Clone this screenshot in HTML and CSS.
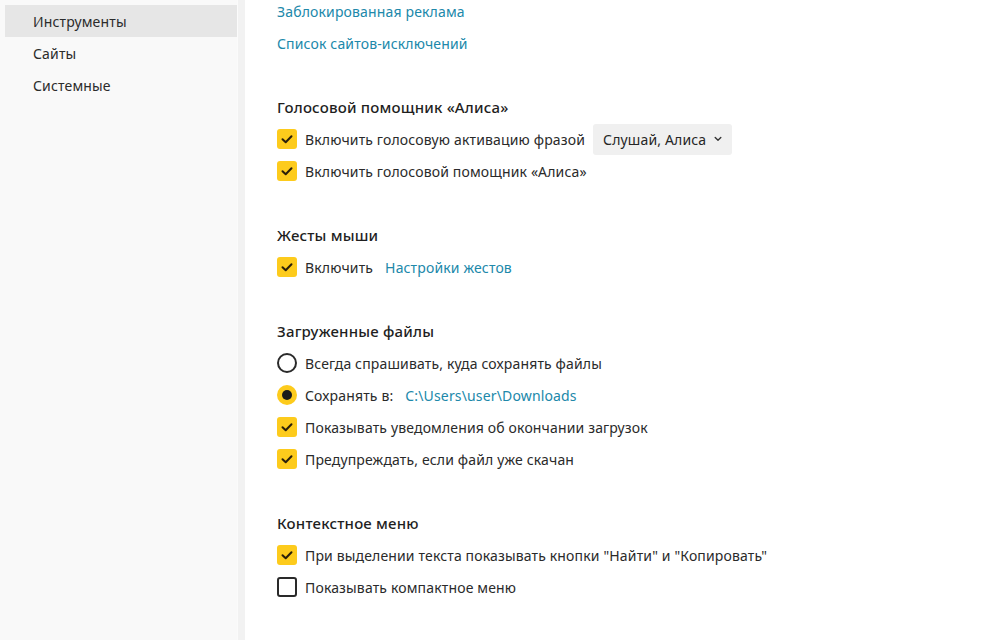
FILE: index.html
```html
<!DOCTYPE html>
<html lang="ru">
<head>
<meta charset="utf-8">
<link rel="stylesheet" href="styles.css">
</head>
<body>
<div class="page">
  <nav class="sidebar">
    <div class="nav-item active">Инструменты</div>
    <div class="nav-item">Сайты</div>
    <div class="nav-item">Системные</div>
  </nav>
  <div class="divider"></div>
  <main class="main">
    <section class="section first">
      <div class="row"><a class="link">Заблокированная реклама</a></div>
      <div class="row"><a class="link">Список сайтов-исключений</a></div>
    </section>

    <section class="section">
      <h2 class="heading">Голосовой помощник «Алиса»</h2>
      <div class="row">
        <span class="cb on"><svg viewBox="0 0 20 20"><path d="M5.5 10.2l3.2 3.1 5.8-6"/></svg></span>
        <span class="label">Включить голосовую активацию фразой</span>
        <span class="select">Слушай, Алиса <svg class="chev" viewBox="0 0 8 6"><path d="M1.2 1.6l2.8 2.6 2.8-2.6"/></svg></span>
      </div>
      <div class="row">
        <span class="cb on"><svg viewBox="0 0 20 20"><path d="M5.5 10.2l3.2 3.1 5.8-6"/></svg></span>
        <span class="label">Включить голосовой помощник «Алиса»</span>
      </div>
    </section>

    <section class="section">
      <h2 class="heading">Жесты мыши</h2>
      <div class="row">
        <span class="cb on"><svg viewBox="0 0 20 20"><path d="M5.5 10.2l3.2 3.1 5.8-6"/></svg></span>
        <span class="label">Включить</span>
        <a class="link inline">Настройки жестов</a>
      </div>
    </section>

    <section class="section">
      <h2 class="heading">Загруженные файлы</h2>
      <div class="row">
        <span class="radio"></span>
        <span class="label">Всегда спрашивать, куда сохранять файлы</span>
      </div>
      <div class="row">
        <span class="radio on"></span>
        <span class="label">Сохранять в:</span>
        <a class="link inline">C:\Users\user\Downloads</a>
      </div>
      <div class="row">
        <span class="cb on"><svg viewBox="0 0 20 20"><path d="M5.5 10.2l3.2 3.1 5.8-6"/></svg></span>
        <span class="label">Показывать уведомления об окончании загрузок</span>
      </div>
      <div class="row">
        <span class="cb on"><svg viewBox="0 0 20 20"><path d="M5.5 10.2l3.2 3.1 5.8-6"/></svg></span>
        <span class="label">Предупреждать, если файл уже скачан</span>
      </div>
    </section>

    <section class="section">
      <h2 class="heading">Контекстное меню</h2>
      <div class="row">
        <span class="cb on"><svg viewBox="0 0 20 20"><path d="M5.5 10.2l3.2 3.1 5.8-6"/></svg></span>
        <span class="label">При выделении текста показывать кнопки "Найти" и "Копировать"</span>
      </div>
      <div class="row">
        <span class="cb"></span>
        <span class="label">Показывать компактное меню</span>
      </div>
    </section>
  </main>
</div>
</body>
</html>
```

FILE: styles.css
```css
* { box-sizing: border-box; }
html, body {
  margin: 0;
  height: 100%;
  background: #ffffff;
  overflow: hidden;
}
body {
  font-family: "Noto Sans", "Open Sans", sans-serif;
  font-size: 14px;
  letter-spacing: 0.15px;
  color: #2a2a2a;
}
.page {
  display: flex;
  height: 640px;
}
.sidebar {
  width: 237px;
  flex: none;
  background: #f9f9f9;
  padding: 5px 0 0 5px;
}
.nav-item {
  height: 32px;
  line-height: 33px;
  padding-left: 28px;
  color: #2b2b2b;
}
.nav-item.active {
  background: #e6e6e6;
}
.divider {
  width: 8px;
  flex: none;
  background: #f2f2f2;
  border-left: 1px solid #fbfbfb;
}
.main {
  flex: 1;
  padding-left: 32px;
}
.section {
  margin-bottom: 32px;
}
.section.first {
  margin-top: -5px;
}
.heading {
  margin: 0;
  height: 32px;
  line-height: 32px;
  font-size: 15px;
  font-weight: 500;
  letter-spacing: 0.2px;
  color: #1f1f1f;
}
.row {
  height: 32px;
  display: flex;
  align-items: center;
}
.link {
  color: #2088aa;
  cursor: pointer;
}
.link.inline {
  margin-left: 12px;
}
.label {
  margin-left: 8px;
  white-space: nowrap;
}
.cb {
  width: 20px;
  height: 20px;
  flex: none;
  border-radius: 3px;
  border: 2px solid #2a2a2a;
  display: flex;
  align-items: center;
  justify-content: center;
}
.cb.on {
  background: #fdcb1c;
  border: none;
}
.cb svg {
  width: 20px;
  height: 20px;
  fill: none;
  stroke: #2a1f0a;
  stroke-width: 2;
  stroke-linecap: round;
  stroke-linejoin: round;
}
.radio {
  width: 20px;
  height: 20px;
  flex: none;
  border-radius: 50%;
  border: 2px solid #2a2a2a;
}
.radio.on {
  border: none;
  background: #fdcb1c;
  display: flex;
  align-items: center;
  justify-content: center;
}
.radio.on::after {
  content: "";
  width: 10px;
  height: 10px;
  border-radius: 50%;
  background: #1a1a1a;
}
.select {
  margin-left: 8px;
  height: 31px;
  padding: 0 10px;
  background: #f0f0f0;
  border-radius: 3px;
  display: flex;
  align-items: center;
  gap: 8px;
  color: #262626;
}
.chev {
  width: 8px;
  height: 6px;
  fill: none;
  stroke: #333;
  stroke-width: 1.4;
  stroke-linecap: round;
  stroke-linejoin: round;
}
```
